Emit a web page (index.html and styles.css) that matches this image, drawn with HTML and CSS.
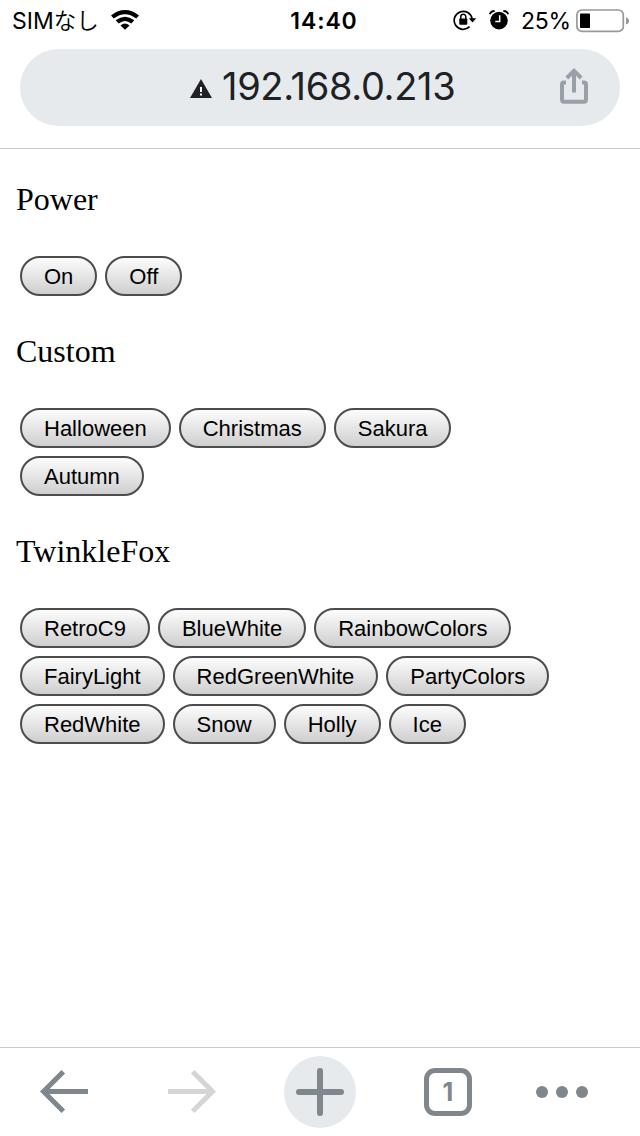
FILE: index.html
```html
<!DOCTYPE html>
<html lang="ja">
<head>
<meta charset="utf-8">
<title>192.168.0.213</title>
<link rel="stylesheet" href="styles.css">
</head>
<body>
<div class="screen">
  <div class="status">
    <div class="carrier"><span class="sim">SIM</span><span class="kana">なし</span>
      <svg class="wifi" width="30" height="24" viewBox="0 0 30 24"><path d="M1 7.4Q15-3.5 29 7.4L26.2 10.6Q15 1.8 3.8 10.6Z"/><path d="M5.7 12.3Q15 5 24.3 12.3L21.4 15.4Q15 10.4 8.6 15.4Z"/><path d="M10.5 17.4Q15 13.4 19.5 17.4L15 21.8Z"/></svg>
    </div>
    <div class="time">14:40</div>
    <div class="indicators">
      <svg width="24" height="22" viewBox="0 0 24 22"><path d="M16.6 17.7A9 9 0 1 1 19.1 10" fill="none" stroke="#000" stroke-width="1.7"/><path d="M15.8 9.3H23.2L19.5 13.4Z"/><rect x="6.3" y="9.5" width="8" height="6.3" rx=".8"/><path d="M7.8 10V7.7a2.5 2.5 0 0 1 5 0V10" fill="none" stroke="#000" stroke-width="1.5"/></svg>
      <svg class="alarm" width="20" height="22" viewBox="0 0 20 22"><circle cx="10" cy="11.6" r="8.8"/><path d="M.8 5.3Q1.6 2.2 5.6 2M19.2 5.3Q18.4 2.2 14.4 2" fill="none" stroke="#000" stroke-width="1.8"/><path d="M10.7 6.2V12.4H6.3" fill="none" stroke="#fff" stroke-width="1.5"/></svg>
      <span class="percent">25%</span>
      <svg class="battery" width="54" height="24" viewBox="0 0 54 24"><rect x=".9" y="1" width="46.4" height="21.4" rx="5" fill="none" stroke="#999" stroke-width="1.7"/><rect x="4" y="4.5" width="10" height="14.5" rx=".7"/><path d="M50 8.2Q53 9.2 53 12T50 15.3Z" fill="#999"/></svg>
    </div>
  </div>
  <div class="address-row">
    <div class="address">
      <svg class="warning" width="22" height="19" viewBox="0 0 22 19"><path d="M11 0L22 19H0Z" fill="#202124"/><path d="M10 8h2v5h-2zM10 14.5h2v2h-2z" fill="#fff"/></svg>
      <span class="host">192.168.0.213</span>
      <svg class="share" width="28" height="36" viewBox="0 0 28 36" fill="none" stroke="#9aa0a8" stroke-width="4"><path d="M6 14.6H4Q2 14.6 2 16.6V31.5Q2 33.7 4 33.7H24Q26 33.7 26 31.5V16.6Q26 14.6 24 14.6H22"/><path d="M14 24.5V3M6.8 10L14 2.9L21.2 10"/></svg>
    </div>
  </div>
  <main class="page">
    <h2 class="title">Power</h2>
    <div class="buttons"><button>On</button><button>Off</button></div>
    <h2 class="title">Custom</h2>
    <div class="buttons"><button>Halloween</button><button>Christmas</button><button>Sakura</button><button>Autumn</button></div>
    <h2 class="title">TwinkleFox</h2>
    <div class="buttons"><button>RetroC9</button><button>BlueWhite</button><button>RainbowColors</button><button>FairyLight</button><button>RedGreenWhite</button><button>PartyColors</button><button>RedWhite</button><button>Snow</button><button>Holly</button><button>Ice</button></div>
  </main>
  <nav class="toolbar">
    <div class="tool"><svg width="128" height="88" fill="none" stroke="#7f878c" stroke-width="5"><path d="M88 43.5H43M63.3 23.7L43.5 43.5L63.3 63.3"/></svg></div>
    <div class="tool"><svg width="128" height="88" fill="none" stroke="#d5d5d5" stroke-width="5"><path d="M40 43.5H85M64.7 23.7L84.5 43.5L64.7 63.3"/></svg></div>
    <div class="tool"><svg width="128" height="88"><circle cx="64" cy="44" r="36" fill="#e6eaed"/><path d="M43 44H85M64 23V65" stroke="#7f878c" stroke-width="6" stroke-linecap="round"/></svg></div>
    <div class="tool"><span class="tabs">1</span></div>
    <div class="tool"><svg width="128" height="88" fill="#7f878c"><circle cx="30" cy="44" r="6"/><circle cx="50" cy="44" r="6"/><circle cx="70" cy="44" r="6"/></svg></div>
  </nav>
</div>
</body>
</html>
```
FILE: styles.css
```css
body { margin: 0; background: #fff; color: #000; }
svg { display: block; flex: none; }
.screen { width: 640px; height: 1136px; display: flex; flex-direction: column; overflow: hidden; }
.status { height: 40px; flex: none; display: grid; grid-template-columns: 240px 168px 232px; font-family: Inter, "Noto Sans CJK JP", sans-serif; font-size: 23px; line-height: 42px; }
.carrier { display: flex; align-items: center; height: 40px; padding-left: 12px; white-space: nowrap; }
.sim { line-height: 40px; padding-top: 2px; }
.kana { font-family: "Noto Sans CJK JP", sans-serif; font-weight: 350; font-size: 22.5px; line-height: 36px; padding-bottom: 2px; }
.wifi { margin-left: 11px; }
.time { text-align: center; font-weight: 600; letter-spacing: .9px; }
.indicators { display: flex; align-items: center; justify-content: flex-end; height: 40px; padding-right: 10px; }
.alarm { margin-left: 12px; }
.percent { margin-left: 12px; padding-top: 2px; line-height: 40px; letter-spacing: -.2px; }
.battery { margin: 1px 0 0 5px; }
.address-row { height: 109px; flex: none; padding: 9px 20px 0; box-sizing: border-box; border-bottom: 1px solid #ccc; }
.address { height: 77px; border-radius: 39px; background: #e6eaed; display: flex; align-items: center; padding: 0 32px 0 170px; }
.warning { margin-top: 2px; }
.host { margin-left: 10px; flex: 1; font-family: Inter, sans-serif; font-size: 38px; line-height: 75px; letter-spacing: -.33px; height: 77px; color: #202124; }
.share { margin-top: -4px; }
.page { flex: 1; padding: 32px 16px 0; }
.title { margin: 0 0 39px; font: 400 32px/36px "Liberation Serif", serif; }
.buttons { display: flex; flex-wrap: wrap; gap: 8px; width: 556px; margin: 0 4px 37px; }
.buttons button { height: 40px; margin: 0; padding: 2px 22px 0; box-sizing: border-box; border: 2px solid #4c4c4c; border-radius: 20px; background: linear-gradient(#fff, #ccc) border-box; color: #000; font: 22px/34px "Liberation Sans", sans-serif; }
.toolbar { height: 88px; flex: none; border-top: 1px solid #c8cacc; display: grid; grid-template-columns: repeat(5, 128px); }
.tool { display: flex; align-items: center; justify-content: center; }
.tabs { width: 48px; height: 48px; box-sizing: border-box; border: 5px solid #7f878c; border-radius: 11px; color: #7f878c; font: 700 25px/38px Inter, sans-serif; text-align: center; }
```
